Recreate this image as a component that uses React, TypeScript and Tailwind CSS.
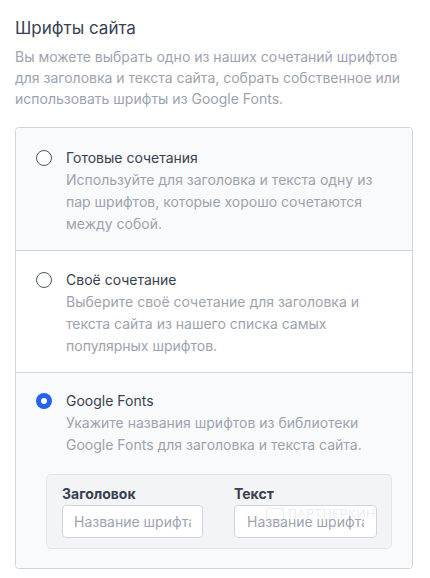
import React from "react";

const font = { fontFamily: "Inter, 'Noto Sans', sans-serif" };

function Radio({ checked }: { checked?: boolean }) {
  if (checked) {
    return (
      <span className="mt-[2px] flex h-4 w-4 shrink-0 items-center justify-center rounded-full bg-[#2563eb]">
        <span className="h-[6px] w-[6px] rounded-full bg-white" />
      </span>
    );
  }
  return <span className="mt-[2px] h-4 w-4 shrink-0 rounded-full border-[1.5px] border-[#4b5563] bg-white" />;
}

function Option({
  title,
  desc,
  checked,
  bg,
  pt = "pt-[20px]",
  children,
}: {
  title: string;
  desc: React.ReactNode;
  checked?: boolean;
  bg: string;
  pt?: string;
  children?: React.ReactNode;
}) {
  return (
    <div className={`${bg} ${pt} px-[20px] pb-[15px]`}>
      <div className="flex gap-[14px]">
        <Radio checked={checked} />
        <div className="flex flex-col">
          <div className="text-[14px] leading-[20px] text-[#374151]">{title}</div>
          <div className="mt-[1px] text-[14px] leading-[22px] text-[#9ca3af]">{desc}</div>
        </div>
      </div>
      {children}
    </div>
  );
}

export default function App() {
  return (
    <div className="min-h-[578px] w-[430px] bg-white px-[15px] pt-[16px]" style={font}>
      <h2 className="text-[17px] leading-[24px] text-[#374151]">Шрифты сайта</h2>
      <p className="mt-[6px] text-[14px] leading-[21px] text-[#9ca3af]">
        Вы можете выбрать одно из наших сочетаний шрифтов для заголовка и текста сайта, собрать собственное или
        использовать шрифты из Google Fonts.
      </p>
      <div className="mt-[18px] w-[398px] overflow-hidden rounded-[4px] border border-[#cfd5dc]">
        <Option
          bg="bg-[#f9fafb]"
          title="Готовые сочетания"
          desc={
            <>
              Используйте для заголовка и текста одну из
              <br />
              пар шрифтов, которые хорошо сочетаются
              <br />
              между собой.
            </>
          }
        />
        <div className="border-t border-[#cfd5dc]" />
        <Option
          bg="bg-white"
          pt="pt-[19px]"
          title="Своё сочетание"
          desc={
            <>
              Выберите своё сочетание для заголовка и
              <br />
              текста сайта из нашего списка самых
              <br />
              популярных шрифтов.
            </>
          }
        />
        <div className="border-t border-[#cfd5dc]" />
        <Option
          bg="bg-[#f9fafb]"
          pt="pt-[18px]"
          checked
          title="Google Fonts"
          desc={
            <>
              Укажите названия шрифтов из библиотеки
              <br />
              Google Fonts для заголовка и текста сайта.
            </>
          }
        >
          <div className="relative mt-[18px] mb-[4px] ml-[10px] flex rounded-[5px] border border-[#e3e5e8] bg-[#f3f4f6] px-[15px] pt-[9px] pb-[10px]">
            <div className="flex w-[172px] shrink-0 flex-col">
              <label className="text-[14px] font-bold leading-[20px] text-[#374151]">Заголовок</label>
              <input
                className="mt-[1px] h-[33px] w-[141px] rounded-[4px] border border-[#d1d5db] bg-white px-[11px] text-[14px] text-[#374151] outline-none placeholder:text-[#9ca3af]"
                placeholder="Название шрифта"
                style={font}
              />
            </div>
            <div className="flex shrink-0 flex-col">
              <label className="text-[14px] font-bold leading-[20px] text-[#374151]">Текст</label>
              <input
                className="mt-[1px] h-[33px] w-[143px] rounded-[4px] border border-[#d1d5db] bg-white px-[12px] text-[14px] text-[#374151] outline-none placeholder:text-[#9ca3af]"
                placeholder="Название шрифта"
                style={font}
              />
            </div>
            <div className="pointer-events-none absolute left-[219px] top-[30px] flex items-center gap-[4px] text-[12px] tracking-[0.5px] text-[#9ca3af] opacity-20">
              <span className="inline-block h-[12px] w-[18px] rounded-[2px] border border-[#9ca3af]" />
              <span>ПАРТНЕРКИН</span>
            </div>
          </div>
        </Option>
      </div>
    </div>
  );
}
